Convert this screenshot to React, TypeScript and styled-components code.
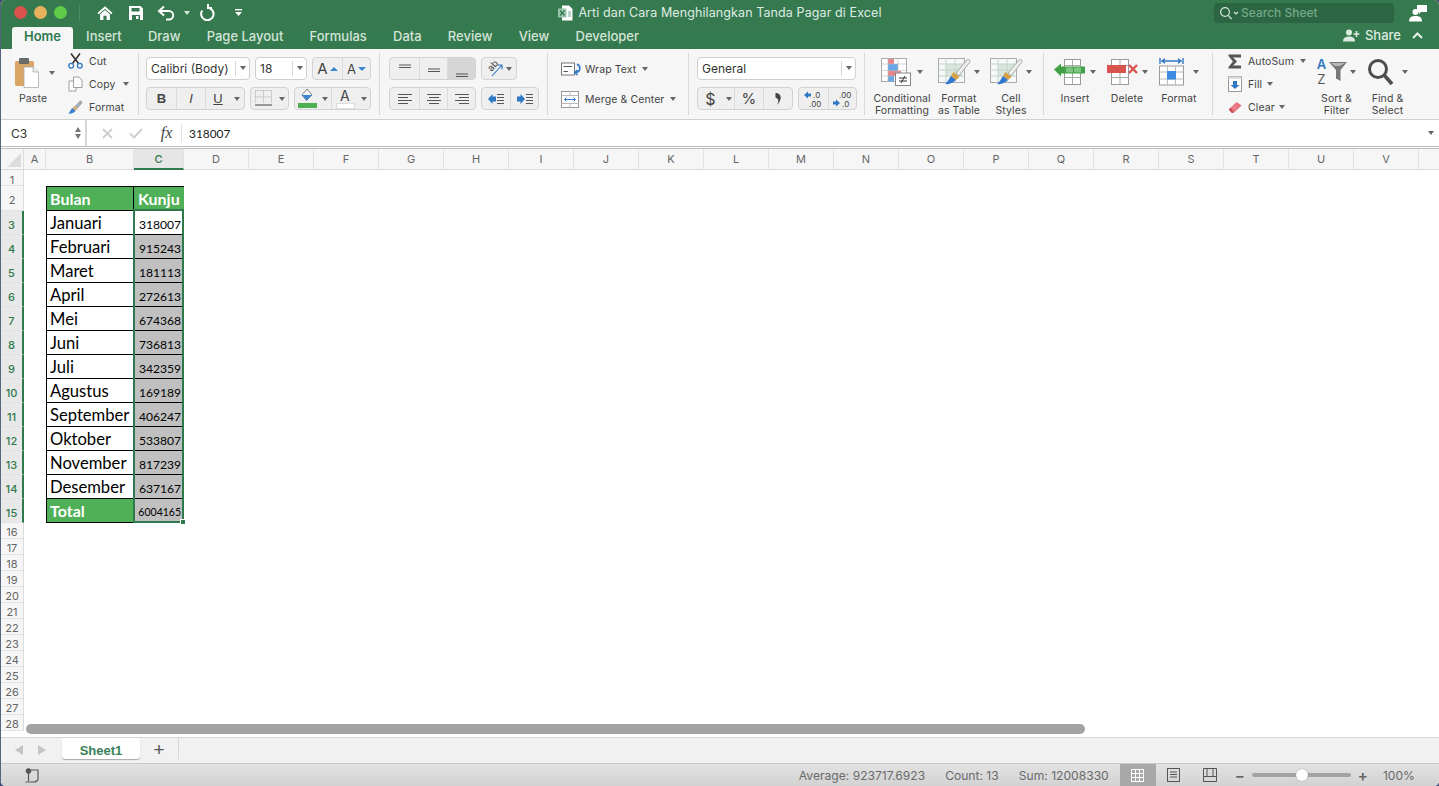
import React from "react";
import styled, { createGlobalStyle } from "styled-components";

const GlobalStyle = createGlobalStyle`
  html, body { margin: 0; padding: 0; height: 100%; background: #3d4c70; overflow: hidden; }
  #root { height: 100%; }
  * { box-sizing: border-box; }
`;

const ui = `Inter, "Liberation Sans", sans-serif`;
const calibri = `Lato, "Open Sans", sans-serif`;

const columns = ["D", "E", "F", "G", "H", "I", "J", "K", "L", "M", "N", "O", "P", "Q", "R", "S", "T", "U", "V", ""];
const months: [string, string][] = [
  ["Januari", "318007"],
  ["Februari", "915243"],
  ["Maret", "181113"],
  ["April", "272613"],
  ["Mei", "674368"],
  ["Juni", "736813"],
  ["Juli", "342359"],
  ["Agustus", "169189"],
  ["September", "406247"],
  ["Oktober", "533807"],
  ["November", "817239"],
  ["Desember", "637167"],
];

/* ---------- icons ---------- */

const HomeIcon = () => (
  <svg width="16" height="16" viewBox="0 0 18 17">
    <path d="M9 1 L17.5 8.6 L16 10 L9 3.8 L2 10 L.5 8.6 Z" fill="#fff" />
    <path d="M3.5 10 L9 5.2 L14.5 10 V16.5 H10.8 V11.5 H7.2 V16.5 H3.5 Z" fill="#fff" />
  </svg>
);
const SaveIcon = () => (
  <svg width="16" height="16" viewBox="0 0 16 16">
    <path d="M1 1 H12.5 L15 3.5 V15 H1 Z M3.5 3 V6.5 H11.5 V3 Z M4 10 V15 H12 V10 Z M8 11 H10.5 V14 H8 Z" fill="#fff" fillRule="evenodd" />
  </svg>
);
const UndoIcon = () => (
  <svg width="20" height="16" viewBox="0 0 20 16" fill="none" stroke="#fff" strokeWidth="2">
    <path d="M7 1.5 L2 6 L7 10.5 M2 6 H12 a4.2 4.2 0 0 1 0 8.5 H9" />
  </svg>
);
const RedoIcon = () => (
  <svg width="16" height="17" viewBox="0 0 16 17" fill="none" stroke="#fff" strokeWidth="2">
    <path d="M3.2 6.5 A6.2 6.2 0 1 0 10 4" />
    <path d="M13 4 H9 V0" />
  </svg>
);
const CustomizeIcon = () => (
  <svg width="9" height="9" viewBox="0 0 9 9">
    <rect x="1" y="1" width="7" height="1.4" fill="#fff" />
    <path d="M1 4 H8 L4.5 8 Z" fill="#fff" />
  </svg>
);
const ExcelFileIcon = () => (
  <svg width="15" height="16" viewBox="0 0 15 16">
    <path d="M4 .5 H11 L14.5 4 V15.5 H4 Z" fill="#fff" />
    <rect x="0" y="3.5" width="8.5" height="9" fill="#9cc4ac" />
    <path d="M2 5.5 L6.5 10.5 M6.5 5.5 L2 10.5" stroke="#2f7a4f" strokeWidth="1.2" />
    <path d="M10 7 H13 M10 9 H13 M10 11 H13" stroke="#7a9" strokeWidth="1" />
  </svg>
);
const SearchGlass = () => (
  <svg width="20" height="14" viewBox="0 0 20 14" fill="none" stroke="#d5e6da" strokeWidth="1.2">
    <circle cx="6" cy="6" r="4.4" />
    <path d="M9.2 9.4 L12.6 13" />
    <path d="M15 6 L17 8 L19 6" />
  </svg>
);
const ProfileIcon = () => (
  <svg width="18" height="18" viewBox="0 0 18 18">
    <path d="M8 1 H18 V8 H12 L10 10 V8 H8 Z" fill="#fff" />
    <circle cx="6.5" cy="8" r="3" fill="#fff" />
    <path d="M0 17.5 C0 13 3 12 6.5 12 C10 12 13 13 13 17.5 Z" fill="#fff" />
  </svg>
);
const ShareIcon = () => (
  <svg width="17" height="13" viewBox="0 0 17 13">
    <circle cx="6" cy="3.5" r="3" fill="#dcebe1" />
    <path d="M0 12.5 C0 8.5 3 7.5 6 7.5 C9 7.5 12 8.5 12 12.5 Z" fill="#dcebe1" />
    <path d="M13.5 2 V8 M10.5 5 H16.5" stroke="#dcebe1" strokeWidth="1.6" />
  </svg>
);
const ChevronUp = () => (
  <svg width="11" height="7" viewBox="0 0 11 7" fill="none" stroke="#e6f0e9" strokeWidth="2">
    <path d="M1 6 L5.5 1.5 L10 6" />
  </svg>
);
const PasteIcon = () => (
  <svg width="24" height="30" viewBox="0 0 24 30">
    <rect x="0" y="3" width="19" height="25" rx="1.5" fill="#d9a565" />
    <rect x="4" y="0" width="10" height="6" rx="1" fill="#6a6a6a" />
    <path d="M9 9 H18 L23.5 14 V29.5 H9 Z" fill="#fff" stroke="#aaa" strokeWidth=".8" />
    <path d="M18 9 V14 H23.5" fill="#eee" stroke="#aaa" strokeWidth=".8" />
  </svg>
);
const CutIcon = () => (
  <svg width="15" height="16" viewBox="0 0 15 16" fill="none">
    <path d="M3 .5 L10.5 10.5 M12 .5 L4.5 10.5" stroke="#333" strokeWidth="1.6" />
    <circle cx="3.2" cy="12.8" r="2.4" stroke="#2f78c4" strokeWidth="1.3" />
    <circle cx="11.8" cy="12.8" r="2.4" stroke="#2f78c4" strokeWidth="1.3" />
  </svg>
);
const CopyIcon = () => (
  <svg width="15" height="16" viewBox="0 0 15 16" fill="#fdfdfd" stroke="#8a8a8a" strokeWidth=".8">
    <path d="M1 5 H8 V15 H1 Z" />
    <path d="M5.5 1 H11 L14 4 V11.5 H5.5 Z" />
  </svg>
);
const BrushIcon = () => (
  <svg width="16" height="15" viewBox="0 0 16 15">
    <path d="M8 6 L12.5 1 C13.5 0 15.5 1.5 14.5 3 L10 8 Z" fill="#aab3bd" stroke="#6a7480" strokeWidth=".6" />
    <path d="M7 5.5 L10.5 8.8 L8 11 L4.5 8 Z" fill="#d6b07a" />
    <path d="M4.5 8 L8 11 C6 14 2.5 14.5 .5 14 C2 12.5 2.5 10 4.5 8 Z" fill="#3a7fd0" />
  </svg>
);
const OrientArrow = () => (
  <svg width="17" height="17" viewBox="0 0 17 17" fill="none">
    <path d="M5 16 L14.5 5.5 M10.5 5 H15 V9.5" stroke="#2f78c4" strokeWidth="1.1" />
  </svg>
);
const Lines = ({ items }: { items: [number, number][] }) => (
  <svg width="16" height="14" viewBox="0 0 16 14" stroke="#555" strokeWidth="1">
    {items.map(([x, w], i) => (
      <path key={i} d={`M${x} ${2.5 + i * 3} H${x + w}`} />
    ))}
  </svg>
);
const VLine = ({ y }: { y: number }) => (
  <svg width="14" height="18" viewBox="0 0 14 18" stroke="#555" strokeWidth="1">
    <path d={`M1 ${y} H13 M1 ${y + 2.5} H13`} />
  </svg>
);
const IndentIcon = ({ flip }: { flip?: boolean }) => (
  <svg width="18" height="12" viewBox="0 0 18 12">
    <path d={flip ? "M1 3.5 H4.5 V1 L9 6 L4.5 11 V8.5 H1 Z" : "M9 3.5 H5.5 V1 L1 6 L5.5 11 V8.5 H9 Z"} fill="#2f78c4" />
    <path d="M10 1.5 H17 M10 4.5 H17 M10 7.5 H17 M10 10.5 H17" stroke="#555" strokeWidth="1" />
  </svg>
);
const BorderIcon = () => (
  <svg width="17" height="17" viewBox="0 0 17 17" fill="none">
    <path d="M.5 .5 H16.5 M.5 .5 V13 M16.5 .5 V13 M8.5 .5 V13 M.5 7 H16.5" stroke="#aaa" strokeWidth="1" strokeDasharray="1 1" />
    <path d="M0 15 H17" stroke="#444" strokeWidth="1.2" />
  </svg>
);
const FillIcon = () => (
  <svg width="19" height="19" viewBox="0 0 19 19">
    <path d="M9 0 L14 6 L8.5 11.5 L4 6 Z" fill="#f5f5f5" stroke="#666" strokeWidth=".8" />
    <path d="M4 6 L14 6 L8.5 11.5 Z" fill="#3a86d0" />
    <rect x="0" y="14" width="19" height="5" fill="#4caf50" />
  </svg>
);
const CommaIcon = () => (
  <svg width="9" height="14" viewBox="0 0 9 14">
    <path d="M1.5 1 C6.5 1 9.5 6.5 3 13 C5 9 5 7 1.5 5.5 Z" fill="#444" />
  </svg>
);
const WrapIcon = () => (
  <svg width="21" height="14" viewBox="0 0 21 14" fill="none">
    <rect x=".5" y="1" width="13" height="12" fill="#fff" stroke="#777" />
    <path d="M2.5 4.5 H11 M2.5 9.5 H7" stroke="#555" />
    <path d="M16 2 C20 4 20 10 14.5 10.5 M16.5 8 L13.8 10.5 L16.5 13" stroke="#2f78c4" strokeWidth="1.6" />
  </svg>
);
const MergeIcon = () => (
  <svg width="18" height="17" viewBox="0 0 18 17" fill="none">
    <rect x=".5" y=".5" width="17" height="16" fill="#fff" stroke="#999" />
    <path d="M.5 4.5 H17.5 M.5 12.5 H17.5 M9 .5 V4.5 M9 12.5 V16.5" stroke="#bbb" />
    <path d="M3.5 8.5 H14.5 M5.5 6.5 L3.5 8.5 L5.5 10.5 M12.5 6.5 L14.5 8.5 L12.5 10.5" stroke="#2f78c4" />
  </svg>
);
const DecIncIcon = () => (
  <svg width="22" height="18" viewBox="0 0 22 18">
    <path d="M1 5 L5 1.5 V3.5 H8 V6.5 H5 V8.5 Z" fill="#2f78c4" />
    <text x="10" y="7.5" fontFamily={ui} fontSize="8" fill="#444">.0</text>
    <text x="6" y="16.5" fontFamily={ui} fontSize="8" fill="#444">.00</text>
  </svg>
);
const DecDecIcon = () => (
  <svg width="22" height="18" viewBox="0 0 22 18">
    <text x="7" y="7.5" fontFamily={ui} fontSize="8" fill="#444">.00</text>
    <path d="M8 13 L4 9.5 V11.5 H1 V14.5 H4 V16.5 Z" fill="#2f78c4" />
    <text x="10" y="16.5" fontFamily={ui} fontSize="8" fill="#444">.0</text>
  </svg>
);
const CondIcon = () => (
  <svg width="30" height="28" viewBox="0 0 30 28">
    <rect x=".5" y=".5" width="25" height="23" fill="#fff" stroke="#aaa" />
    <rect x="7" y="1" width="6" height="5" fill="#e8868a" />
    <rect x="7" y="6" width="10" height="7" fill="#6aa5e6" />
    <rect x="7" y="13" width="13" height="5" fill="#e8868a" />
    <rect x="7" y="18" width="6" height="5.5" fill="#6aa5e6" />
    <path d="M7 .5 V23.5 M17 .5 V23.5 M.5 6 H25 M.5 12.5 H25 M.5 18 H25" stroke="#bbb" strokeWidth=".6" />
    <rect x="14.5" y="15" width="15" height="12.5" fill="#fff" stroke="#888" />
    <path d="M18 20 H26 M18 23 H26 M24 18 L20 25" stroke="#333" strokeWidth="1" />
  </svg>
);
const TableBrushIcon = () => (
  <svg width="33" height="27" viewBox="0 0 33 27">
    <rect x=".5" y=".5" width="26" height="24" fill="#f6f9f7" stroke="#aaa" />
    <rect x="8" y="6" width="16" height="13" fill="#d9e6de" />
    <path d="M8 .5 V24.5 M17 .5 V24.5 M.5 6 H26.5 M.5 12 H26.5 M.5 18 H26.5" stroke="#c4d4ca" />
    <path d="M18 15 L29 2 C30.5 .5 33 2.5 31.5 4.5 L21 18 Z" fill="#eee" stroke="#888" strokeWidth=".7" />
    <path d="M15.5 14 L21.5 19 L18 22 L13 18 Z" fill="#d9a040" />
    <path d="M13 18 L18 22 C14 26 9 26.5 7 26 C10 24 10.5 21 13 18 Z" fill="#2f78d0" />
  </svg>
);
const InsertIcon = () => (
  <svg width="31" height="26" viewBox="0 0 31 26">
    <rect x="10.5" y=".5" width="16" height="25" fill="#fff" stroke="#999" />
    <path d="M18.5 .5 V25.5 M10.5 6.5 H26.5 M10.5 18.5 H26.5" stroke="#aaa" />
    <path d="M0 10.5 L7 4.5 V7.5 H31 V14.5 H7 V17.5 Z" fill="#43a047" />
    <rect x="12" y="8.5" width="7" height="5" fill="#7cc47f" />
    <rect x="20" y="8.5" width="7" height="5" fill="#7cc47f" />
  </svg>
);
const DeleteIcon = () => (
  <svg width="31" height="26" viewBox="0 0 31 26">
    <rect x="4.5" y=".5" width="17" height="25" fill="#fff" stroke="#999" />
    <path d="M13 .5 V25.5 M4.5 6.5 H21.5 M4.5 18.5 H21.5" stroke="#aaa" />
    <rect x="0" y="6" width="19" height="8" fill="#d9534f" />
    <path d="M22 6 L30 14 M30 6 L22 14" stroke="#d9534f" strokeWidth="2.4" />
  </svg>
);
const FormatIcon = () => (
  <svg width="25" height="28" viewBox="0 0 25 28">
    <path d="M1 0 V6 M24 0 V6 M3 3 H22 M6 .8 L3 3 L6 5.2 M19 .8 L22 3 L19 5.2" stroke="#2f78c4" strokeWidth="1.4" fill="none" />
    <rect x=".5" y="8" width="24" height="19" fill="#fff" stroke="#999" />
    <path d="M8.5 8 V27 M16.5 8 V27 M.5 14 H24.5 M.5 21 H24.5" stroke="#bbb" />
    <rect x="8" y="13" width="9" height="8.5" fill="#3f8be0" />
  </svg>
);
const SigmaIcon = () => (
  <svg width="14" height="15" viewBox="0 0 14 15">
    <path d="M.5 .5 H13 V3.5 H5 L9 7.5 L5 11.5 H13 V14.5 H.5 V13 L5 7.5 L.5 2 Z" fill="#555" />
  </svg>
);
const FillDownIcon = () => (
  <svg width="14" height="16" viewBox="0 0 14 16">
    <rect x=".5" y=".5" width="13" height="15" fill="#fff" stroke="#999" />
    <rect x=".5" y=".5" width="13" height="2.5" fill="#ddd" />
    <path d="M5 5 H9 V9 H11.5 L7 13 L2.5 9 H5 Z" fill="#2f78c4" />
  </svg>
);
const EraserIcon = () => (
  <svg width="17" height="15" viewBox="0 0 17 15">
    <path d="M1 9.5 L10.5 .8 L16.5 5 L7 14 H4 Z" fill="#e8757e" />
    <path d="M1 9.5 L4.5 14 H7 L3.5 8 Z" fill="#c24a55" />
    <path d="M6 7 H7 M9 6 H10 M8 9 H9" stroke="#fbd" strokeWidth="1" />
  </svg>
);
const FunnelIcon = () => (
  <svg width="18" height="20" viewBox="0 0 18 20">
    <path d="M0 0 H18 L11.5 8 V19 L7 16.5 V8 Z" fill="#777" />
    <path d="M2 1 H16 L11 4 H6 Z" fill="#b8b8b8" />
  </svg>
);
const FindIcon = () => (
  <svg width="27" height="28" viewBox="0 0 27 28" fill="none">
    <circle cx="11" cy="11" r="8.5" stroke="#4d4d4d" strokeWidth="3" />
    <path d="M17.5 17.5 L25 26" stroke="#4d4d4d" strokeWidth="3.6" />
  </svg>
);
const CrossIcon = () => (
  <svg width="11" height="11" viewBox="0 0 11 11" fill="none" stroke="#cfcfcf" strokeWidth="2">
    <path d="M1 1 L10 10 M10 1 L1 10" />
  </svg>
);
const CheckIcon = () => (
  <svg width="14" height="11" viewBox="0 0 14 11" fill="none" stroke="#cfcfcf" strokeWidth="2">
    <path d="M1 5.5 L5 9.5 L13 1" />
  </svg>
);
const NormalViewIcon = () => (
  <svg width="13" height="13" viewBox="0 0 13 13" fill="none" stroke="#fff" strokeWidth="1">
    <rect x=".5" y=".5" width="12" height="12" />
    <path d="M4.5 .5 V12.5 M8.5 .5 V12.5 M.5 4.5 H12.5 M.5 8.5 H12.5" />
  </svg>
);
const PageViewIcon = () => (
  <svg width="13" height="14" viewBox="0 0 13 14" fill="none" stroke="#555" strokeWidth="1">
    <rect x=".5" y=".5" width="12" height="13" />
    <path d="M3 4 H10 M3 6.5 H10 M3 9 H10" />
  </svg>
);
const BreakViewIcon = () => (
  <svg width="14" height="14" viewBox="0 0 14 14" fill="none" stroke="#555" strokeWidth="1">
    <path d="M.5 .5 H13.5 V13.5 H.5 Z M.5 8.5 H13.5 M4 .5 V8.5 M10 .5 V8.5" />
  </svg>
);
const MacroIcon = () => (
  <svg width="16" height="15" viewBox="0 0 16 15" fill="none" stroke="#555" strokeWidth="1.2">
    <circle cx="3.5" cy="3" r="2.2" fill="#555" />
    <path d="M3.5 5 V13 M.5 14 H11 M6 2 H13 V11 C13 13 11.5 13.5 10 13" />
  </svg>
);

/* ---------- title bar ---------- */

const Window = styled.div`
  height: 786px;
  display: flex;
  flex-direction: column;
  background: #fff;
  border-left: 1px solid #56657f;
  border-radius: 5px;
  overflow: hidden;
  font-family: ${ui};
`;

const Header = styled.header`
  height: 49px;
  background: linear-gradient(#37794f, #357a4f);
  color: #fff;
`;

const TitleRow = styled.div`
  height: 25px;
  display: grid;
  grid-template-columns: 1fr auto 1fr;
  align-items: center;
`;

const QuickAccess = styled.div`
  display: flex;
  align-items: center;
  padding-left: 13px;
`;

const Light = styled.span<{ $c: string }>`
  width: 13px;
  height: 13px;
  border-radius: 50%;
  margin-right: 7px;
  background: ${(p) => p.$c};
`;

const QuickDivider = styled.span`
  width: 1px;
  height: 16px;
  background: #4a8a62;
  margin: 0 17px 0 5px;
`;

const QuickSlot = styled.span<{ $gap: number }>`
  display: flex;
  align-items: center;
  margin-right: ${(p) => p.$gap}px;
`;

const SmallCaret = styled.span<{ $c?: string; $m?: number }>`
  display: inline-block;
  width: 0;
  height: 0;
  flex: none;
  border-left: 3px solid transparent;
  border-right: 3px solid transparent;
  border-top: 4px solid ${(p) => p.$c || "#666"};
  margin-left: ${(p) => p.$m ?? 0}px;
`;

const Title = styled.div`
  display: flex;
  align-items: center;
  gap: 5px;
  font-size: 12.5px;
  letter-spacing: 0.1px;
  color: #dfece4;
`;

const TitleRight = styled.div`
  display: flex;
  justify-content: flex-end;
  align-items: center;
  padding-right: 12px;
`;

const SearchBox = styled.div`
  width: 180px;
  height: 20px;
  border-radius: 4px;
  background: #2c6542;
  display: flex;
  align-items: center;
  gap: 2px;
  padding-left: 5px;
  margin-right: 15px;
  font-size: 12px;
  font-weight: 500;
  color: #72a988;
`;

const TabRow = styled.div`
  height: 24px;
  display: flex;
  align-items: flex-end;
  justify-content: space-between;
  padding-left: 11px;
`;

const Tabs = styled.nav`
  display: flex;
  align-items: flex-end;
`;

const Tab = styled.div<{ $active?: boolean }>`
  height: 22px;
  display: flex;
  align-items: center;
  padding: 0 ${(p) => (p.$active ? 12 : 13.1)}px 4px;
  font-size: 13px;
  border-radius: 3px 3px 0 0;
  color: ${(p) => (p.$active ? "#2f7a4d" : "#d3e4d9")};
  background: ${(p) => (p.$active ? "#f6f6f6" : "transparent")};
  font-weight: ${(p) => (p.$active ? 600 : 500)};
`;

const ShareArea = styled.div`
  display: flex;
  align-items: center;
  gap: 5px;
  height: 26px;
  padding-right: 16px;
  margin-bottom: 1px;
  font-size: 13px;
  font-weight: 500;
  color: #dcebe1;
`;

const ShareLabel = styled.span`
  margin-right: 6px;
`;

/* ---------- ribbon ---------- */

const Ribbon = styled.section`
  height: 71px;
  display: flex;
  padding: 4px 0 4px;
  background: #f6f6f6;
  border-bottom: 1px solid #cfcfcf;
  color: #444;
  font-size: 10.5px;
  letter-spacing: 0.1px;
`;

const Group = styled.div<{ $w?: number; $pl?: number }>`
  width: ${(p) => (p.$w ? `${p.$w}px` : "auto")};
  flex: ${(p) => (p.$w ? "none" : 1)};
  height: 62px;
  padding-left: ${(p) => p.$pl ?? 9}px;
  display: flex;
  border-right: ${(p) => (p.$w ? "1px solid #d9d9d9" : "none")};
`;

const Stack = styled.div<{ $gap: number; $pt: number; $w?: number }>`
  display: flex;
  flex-direction: column;
  gap: ${(p) => p.$gap}px;
  padding-top: ${(p) => p.$pt}px;
  ${(p) => p.$w && `width: ${p.$w}px;`}
`;

const ControlRow = styled.div`
  display: flex;
  gap: 5px;
  height: 23px;
`;

const Field = styled.div<{ $w: number }>`
  width: ${(p) => p.$w}px;
  height: 23px;
  display: flex;
  align-items: center;
  background: #fff;
  border: 1px solid #d0d0d0;
  border-radius: 4px;
  padding: 0 0 1px 4px;
  font-size: 12px;
  letter-spacing: 0;
  color: #333;
`;

const FieldArrow = styled.span`
  margin-left: auto;
  width: 14px;
  height: 15px;
  border-left: 1px solid #d8d8d8;
  display: flex;
  align-items: center;
  justify-content: center;
`;

const Segments = styled.div`
  display: flex;
  height: 23px;
  border: 1px solid #d2d2d2;
  border-radius: 4px;
  background: #efefef;
  overflow: hidden;
`;

const Segment = styled.div<{ $w: number; $on?: boolean; $plain?: boolean }>`
  width: ${(p) => p.$w}px;
  display: flex;
  align-items: center;
  justify-content: center;
  gap: 2px;
  color: #444;
  border-left: ${(p) => (p.$plain ? "none" : "1px solid #dadada")};
  background: ${(p) => (p.$on ? "#d6d6d6" : "transparent")};
  &:first-child {
    border-left: none;
  }
`;

const StyledLetter = styled.span<{ $b?: boolean; $i?: boolean; $u?: boolean }>`
  font-weight: ${(p) => (p.$b ? 700 : 400)};
  font-style: ${(p) => (p.$i ? "italic" : "normal")};
  text-decoration: ${(p) => (p.$u ? "underline" : "none")};
  font-family: "Liberation Sans", sans-serif;
  font-size: 13px;
`;

const Glyph = styled.span<{ $size: number }>`
  font-size: ${(p) => p.$size}px;
  line-height: 16px;
  color: #444;
`;

const TinyUp = styled.span<{ $down?: boolean }>`
  width: 0;
  height: 0;
  border-left: 4px solid transparent;
  border-right: 4px solid transparent;
  ${(p) => (p.$down ? "border-top: 4px solid #3a86d0;" : "border-bottom: 4px solid #3a86d0;")}
`;

const ColorLetter = styled.span`
  width: 17px;
  display: flex;
  flex-direction: column;
  align-items: center;
  font-size: 14px;
  line-height: 15px;
  color: #444;
  &::after {
    content: "";
    width: 17px;
    height: 4px;
    background: #fff;
    border: 1px solid #dcdcdc;
  }
`;

const OrientBox = styled.span`
  position: relative;
  width: 17px;
  height: 17px;
`;

const OrientText = styled.span`
  position: absolute;
  left: 0;
  top: 0;
  font-size: 9.5px;
  line-height: 11px;
  color: #444;
  transform: rotate(-48deg);
`;

const SortLetters = styled.span`
  display: flex;
  flex-direction: column;
  font-size: 13px;
  line-height: 15px;
`;

const SortA = styled.span`
  font-weight: 600;
  color: #2f78c4;
`;

const SortZ = styled.span`
  color: #555;
`;

const PasteBlock = styled.div`
  width: 67px;
  flex: none;
  display: flex;
  flex-direction: column;
`;

const PasteIconRow = styled.div`
  height: 39px;
  flex: none;
  display: flex;
  align-items: center;
  gap: 10px;
  padding-left: 14px;
`;

const PasteLabel = styled.span`
  margin: 1px 0 0 18px;
  line-height: 12px;
`;

const SmallRow = styled.div<{ $iconW: number; $iconGap?: number }>`
  height: 16px;
  display: flex;
  align-items: center;
  white-space: nowrap;
  & > svg {
    width: ${(p) => p.$iconW}px;
    flex: none;
    margin-right: ${(p) => p.$iconGap ?? 6}px;
  }
`;

const LargeButton = styled.div<{ $w: number }>`
  width: ${(p) => p.$w}px;
  flex: none;
  display: flex;
  flex-direction: column;
  align-items: center;
  text-align: center;
  line-height: 12px;
  white-space: nowrap;
`;

const LargeIcon = styled.div<{ $gap?: number }>`
  height: 40px;
  flex: none;
  padding-bottom: 3px;
  display: flex;
  align-items: center;
  gap: ${(p) => p.$gap ?? 3}px;
`;

/* ---------- formula bar ---------- */

const FormulaBar = styled.div`
  height: 26px;
  display: flex;
  align-items: center;
  background: #fff;
  font-size: 12px;
  color: #333;
`;

const NameBox = styled.div`
  width: 86px;
  height: 100%;
  display: flex;
  align-items: center;
  justify-content: space-between;
  padding: 0 4px 0 10px;
  border-right: 2px solid #d5d5d5;
`;

const Spinner = styled.div`
  display: flex;
  flex-direction: column;
  gap: 2px;
`;

const SpinArrow = styled.span<{ $up?: boolean }>`
  width: 0;
  height: 0;
  border-left: 3.5px solid transparent;
  border-right: 3.5px solid transparent;
  ${(p) => (p.$up ? "border-bottom: 5px solid #777;" : "border-top: 5px solid #777;")}
`;

const FormulaIcon = styled.span<{ $w: number }>`
  width: ${(p) => p.$w}px;
  display: flex;
  justify-content: center;
`;

const FxLabel = styled.span`
  width: 37px;
  padding-left: 7px;
  text-align: center;
  font-family: "Liberation Serif", serif;
  font-style: italic;
  font-size: 16px;
  color: #444;
  border-right: 1px solid #e0e0e0;
  margin-right: 7px;
  line-height: 18px;
`;

const FormulaText = styled.span`
  flex: 1;
  font-family: ${calibri};
  font-size: 11.9px;
  color: #222;
`;

const FormulaDrop = styled.span`
  display: flex;
  padding-right: 5px;
`;

const DoubleRule = styled.div`
  height: 3px;
  border-top: 1px solid #bdbdbd;
  border-bottom: 1px solid #bdbdbd;
  background: #fff;
`;

/* ---------- sheet ---------- */

const Sheet = styled.main`
  position: relative;
  flex: 1;
  min-height: 0;
  overflow: hidden;
  background: #fff;
  font-family: ${calibri};
`;

const ColumnRow = styled.div`
  height: 21px;
  display: flex;
  background: #f6f6f6;
  border-bottom: 1px solid #dcdcdc;
`;

const Corner = styled.div`
  position: relative;
  width: 23px;
  flex: none;
  border-right: 1px solid #dcdcdc;
  &::after {
    content: "";
    position: absolute;
    right: 2px;
    bottom: 2px;
    border-left: 14px solid transparent;
    border-bottom: 14px solid #dcdcdc;
  }
`;

const ColHead = styled.div<{ $w: number; $on?: boolean }>`
  width: ${(p) => p.$w}px;
  flex: none;
  display: flex;
  align-items: center;
  justify-content: center;
  font-family: ${ui};
  font-size: 11px;
  color: ${(p) => (p.$on ? "#2f7a4d" : "#666")};
  border-right: 1px solid #e2e2e2;
  ${(p) => p.$on && "background: #e6e6e6; border-bottom: 2px solid #2f7a4d; height: 21px; font-weight: 500;"}
`;

const Row = styled.div<{ $h: number }>`
  height: ${(p) => p.$h}px;
  display: flex;
`;

const RowHead = styled.div<{ $on?: boolean; $low?: boolean }>`
  width: 23px;
  flex: none;
  display: flex;
  align-items: center;
  justify-content: center;
  font-family: ${ui};
  font-size: 11px;
  padding-top: ${(p) => (p.$low ? 2 : 4)}px;
  color: ${(p) => (p.$on ? "#2f7a4d" : "#666")};
  font-weight: ${(p) => (p.$on ? 500 : 400)};
  background: ${(p) => (p.$on ? "#e8e8e8" : "#f6f6f6")};
  border-bottom: 1px solid #e2e2e2;
  border-right: ${(p) => (p.$on ? "2px solid #2f7a4d" : "1px solid #dcdcdc")};
`;

const ColumnA = styled.div`
  width: 22px;
  flex: none;
`;

const NameCell = styled.div<{ $head?: boolean; $top?: boolean }>`
  width: 88px;
  flex: none;
  display: flex;
  align-items: center;
  padding: ${(p) => (p.$head ? "0 0 1px 3px" : "1px 0 0 3px")};
  font-size: ${(p) => (p.$head ? 16 : 16.6)}px;
  color: ${(p) => (p.$head ? "#fff" : "#000")};
  font-weight: ${(p) => (p.$head ? 700 : 400)};
  background: ${(p) => (p.$head ? "#50b058" : "#fff")};
  border-left: 1px solid #000;
  border-right: 1px solid #000;
  border-bottom: 1px solid #000;
  ${(p) => p.$top && "border-top: 1px solid #000;"}
`;

const ValueCell = styled.div<{ $head?: boolean; $fill?: boolean; $small?: boolean; $top?: boolean }>`
  width: 50px;
  flex: none;
  display: flex;
  align-items: center;
  justify-content: ${(p) => (p.$head ? "flex-start" : "flex-end")};
  white-space: nowrap;
  padding: ${(p) => (p.$head ? "0 0 1px 4px" : "3px 3px 0 0")};
  font-size: ${(p) => (p.$head ? 16 : p.$small ? 10.5 : 12.1)}px;
  font-weight: ${(p) => (p.$head ? 700 : 400)};
  color: ${(p) => (p.$head ? "#fff" : "#000")};
  background: ${(p) => (p.$head ? "#50b058" : p.$fill ? "#c0c0c0" : "#fff")};
  border-bottom: 1px solid #000;
  ${(p) => p.$top && "border-top: 1px solid #000;"}
`;

const Selection = styled.div`
  position: absolute;
  left: 132px;
  top: 60px;
  width: 51px;
  height: 314px;
  border: 2px solid #2f7a4d;
  pointer-events: none;
`;

const FillHandle = styled.span`
  position: absolute;
  right: -4px;
  bottom: -4px;
  width: 6px;
  height: 6px;
  background: #2f7a4d;
  border: 1px solid #fff;
`;

const ScrollThumb = styled.div`
  position: absolute;
  left: 25px;
  bottom: 3px;
  width: 1059px;
  height: 10px;
  border-radius: 5px;
  background: #a3a3a3;
`;

/* ---------- bottom bars ---------- */

const SheetTabs = styled.div`
  height: 26px;
  display: flex;
  align-items: flex-start;
  background: #f1f1f1;
  border-top: 1px solid #d4d4d4;
  padding-left: 14px;
`;

const NavArrow = styled.span<{ $right?: boolean }>`
  width: 0;
  height: 0;
  margin: 7px 15px 0 0;
  border-top: 5.5px solid transparent;
  border-bottom: 5.5px solid transparent;
  ${(p) => (p.$right ? "border-left: 8px solid #c4c4c4;" : "border-right: 8px solid #c4c4c4;")}
`;

const SheetTab = styled.div`
  width: 78px;
  height: 21px;
  margin-left: 1px;
  padding-top: 3px;
  display: flex;
  align-items: center;
  justify-content: center;
  background: #fff;
  border-radius: 0 0 3px 3px;
  box-shadow: 0 1px 1px #a8a8a8;
  font-family: "Liberation Sans", sans-serif;
  font-size: 13px;
  font-weight: 700;
  color: #3a8058;
`;

const AddSheet = styled.div`
  width: 39px;
  height: 21px;
  padding-top: 2px;
  display: flex;
  align-items: center;
  justify-content: center;
  font-family: "Liberation Sans", sans-serif;
  font-size: 19px;
  color: #555;
  border-right: 1px solid #d6d6d6;
`;

const StatusBar = styled.footer`
  height: 23px;
  display: flex;
  align-items: center;
  background: linear-gradient(#e2e2e2, #d2d2d2);
  border-top: 1px solid #c8c8c8;
  padding-left: 24px;
  font-size: 12.1px;
  color: #6a6a6a;
`;

const StatusItem = styled.span<{ $mr: number }>`
  margin-right: ${(p) => p.$mr}px;
  white-space: nowrap;
`;

const Spacer = styled.div`
  flex: 1;
`;

const ViewButton = styled.div<{ $on?: boolean }>`
  width: 36px;
  height: 23px;
  display: flex;
  align-items: center;
  justify-content: center;
  background: ${(p) => (p.$on ? "#a8a8a8" : "transparent")};
`;

const ZoomSign = styled.span<{ $ml?: number }>`
  margin-left: ${(p) => p.$ml ?? 0}px;
  font-size: 15px;
  font-weight: 600;
  color: #666;
`;

const ZoomTrack = styled.div`
  position: relative;
  width: 99px;
  height: 4px;
  margin: 0 7px;
  border-radius: 2px;
  background: #a3a3a3;
`;

const ZoomKnob = styled.span`
  position: absolute;
  left: 44px;
  top: -4px;
  width: 12px;
  height: 12px;
  border-radius: 50%;
  background: #fff;
  box-shadow: 0 0 1px #777;
`;

const ZoomValue = styled.span`
  margin: 0 24px 0 15px;
`;

/* ---------- page ---------- */

const App = () => {
  return (
    <>
      <GlobalStyle />
      <Window>
        <Header>
          <TitleRow>
            <QuickAccess>
              <Light $c="#d9534a" />
              <Light $c="#e8b15e" />
              <Light $c="#5ecb4b" />
              <QuickDivider />
              <QuickSlot $gap={15}><HomeIcon /></QuickSlot>
              <QuickSlot $gap={13}><SaveIcon /></QuickSlot>
              <QuickSlot $gap={9}>
                <UndoIcon />
                <SmallCaret $c="#d7e6dc" $m={7} />
              </QuickSlot>
              <QuickSlot $gap={19}><RedoIcon /></QuickSlot>
              <QuickSlot $gap={0}><CustomizeIcon /></QuickSlot>
            </QuickAccess>
            <Title>
              <ExcelFileIcon />
              Arti dan Cara Menghilangkan Tanda Pagar di Excel
            </Title>
            <TitleRight>
              <SearchBox>
                <SearchGlass />
                Search Sheet
              </SearchBox>
              <ProfileIcon />
            </TitleRight>
          </TitleRow>
          <TabRow>
            <Tabs>
              <Tab $active>Home</Tab>
              <Tab>Insert</Tab>
              <Tab>Draw</Tab>
              <Tab>Page Layout</Tab>
              <Tab>Formulas</Tab>
              <Tab>Data</Tab>
              <Tab>Review</Tab>
              <Tab>View</Tab>
              <Tab>Developer</Tab>
            </Tabs>
            <ShareArea>
              <ShareIcon />
              <ShareLabel>Share</ShareLabel>
              <ChevronUp />
            </ShareArea>
          </TabRow>
        </Header>

        <Ribbon>
          <Group $w={138} $pl={0}>
            <PasteBlock>
              <PasteIconRow>
                <PasteIcon />
                <SmallCaret />
              </PasteIconRow>
              <PasteLabel>Paste</PasteLabel>
            </PasteBlock>
            <Stack $gap={7} $pt={0}>
              <SmallRow $iconW={15}><CutIcon />Cut</SmallRow>
              <SmallRow $iconW={15}><CopyIcon />Copy <SmallCaret $m={7} /></SmallRow>
              <SmallRow $iconW={15}><BrushIcon />Format</SmallRow>
            </Stack>
          </Group>

          <Group $w={241} $pl={7}>
            <Stack $gap={7} $pt={4}>
              <ControlRow>
                <Field $w={104}>Calibri (Body)<FieldArrow><SmallCaret /></FieldArrow></Field>
                <Field $w={52}>18<FieldArrow><SmallCaret /></FieldArrow></Field>
                <Segments>
                  <Segment $w={29}><Glyph $size={15}>A</Glyph><TinyUp /></Segment>
                  <Segment $w={28}><Glyph $size={13}>A</Glyph><TinyUp $down /></Segment>
                </Segments>
              </ControlRow>
              <ControlRow>
                <Segments>
                  <Segment $w={29}><StyledLetter $b>B</StyledLetter></Segment>
                  <Segment $w={29}><StyledLetter $i>I</StyledLetter></Segment>
                  <Segment $w={25}><StyledLetter $u>U</StyledLetter></Segment>
                  <Segment $w={14} $plain><SmallCaret /></Segment>
                </Segments>
                <Segments>
                  <Segment $w={24}><BorderIcon /></Segment>
                  <Segment $w={13} $plain><SmallCaret /></Segment>
                </Segments>
                <Segments>
                  <Segment $w={24}><FillIcon /></Segment>
                  <Segment $w={12} $plain><SmallCaret /></Segment>
                  <Segment $w={27}><ColorLetter>A</ColorLetter></Segment>
                  <Segment $w={12} $plain><SmallCaret /></Segment>
                </Segments>
              </ControlRow>
            </Stack>
          </Group>

          <Group $w={168} $pl={9}>
            <Stack $gap={7} $pt={4}>
              <ControlRow>
                <Segments>
                  <Segment $w={29}><VLine y={5} /></Segment>
                  <Segment $w={28}><VLine y={9} /></Segment>
                  <Segment $w={28} $on><VLine y={14} /></Segment>
                </Segments>
                <Segments>
                  <Segment $w={34}>
                    <OrientBox>
                      <OrientArrow />
                      <OrientText>ab</OrientText>
                    </OrientBox>
                    <SmallCaret />
                  </Segment>
                </Segments>
              </ControlRow>
              <ControlRow>
                <Segments>
                  <Segment $w={29}><Lines items={[[1, 14], [1, 10], [1, 14], [1, 10]]} /></Segment>
                  <Segment $w={28}><Lines items={[[1, 14], [3, 10], [1, 14], [3, 10]]} /></Segment>
                  <Segment $w={28}><Lines items={[[1, 14], [5, 10], [1, 14], [5, 10]]} /></Segment>
                </Segments>
                <Segments>
                  <Segment $w={28}><IndentIcon /></Segment>
                  <Segment $w={28}><IndentIcon flip /></Segment>
                </Segments>
              </ControlRow>
            </Stack>
          </Group>

          <Group $w={141} $pl={13}>
            <Stack $gap={14} $pt={8}>
              <SmallRow $iconW={21} $iconGap={3}><WrapIcon />Wrap Text <SmallCaret $m={6} /></SmallRow>
              <SmallRow $iconW={18}><MergeIcon />Merge &amp; Center <SmallCaret $m={6} /></SmallRow>
            </Stack>
          </Group>

          <Group $w={176} $pl={8}>
            <Stack $gap={7} $pt={4}>
              <Field $w={159}>General<FieldArrow><SmallCaret /></FieldArrow></Field>
              <ControlRow>
                <Segments>
                  <Segment $w={25}><Glyph $size={16}>$</Glyph></Segment>
                  <Segment $w={11} $plain><SmallCaret /></Segment>
                  <Segment $w={29}><Glyph $size={15}>%</Glyph></Segment>
                  <Segment $w={29}><CommaIcon /></Segment>
                </Segments>
                <Segments>
                  <Segment $w={29}><DecIncIcon /></Segment>
                  <Segment $w={28}><DecDecIcon /></Segment>
                </Segments>
              </ControlRow>
            </Stack>
          </Group>

          <Group $w={179} $pl={9}>
            <LargeButton $w={56}>
              <LargeIcon $gap={6}><CondIcon /><SmallCaret /></LargeIcon>
              Conditional<br />Formatting
            </LargeButton>
            <LargeButton $w={58}>
              <LargeIcon><TableBrushIcon /><SmallCaret /></LargeIcon>
              Format<br />as Table
            </LargeButton>
            <LargeButton $w={46}>
              <LargeIcon><TableBrushIcon /><SmallCaret /></LargeIcon>
              Cell<br />Styles
            </LargeButton>
          </Group>

          <Group $w={169} $pl={5}>
            <LargeButton $w={52}>
              <LargeIcon $gap={5}><InsertIcon /><SmallCaret /></LargeIcon>
              Insert
            </LargeButton>
            <LargeButton $w={52}>
              <LargeIcon $gap={4}><DeleteIcon /><SmallCaret /></LargeIcon>
              Delete
            </LargeButton>
            <LargeButton $w={52}>
              <LargeIcon $gap={9}><FormatIcon /><SmallCaret /></LargeIcon>
              Format
            </LargeButton>
          </Group>

          <Group $pl={15}>
            <Stack $gap={7} $pt={0} $w={83}>
              <SmallRow $iconW={14}><SigmaIcon />AutoSum <SmallCaret $m={6} /></SmallRow>
              <SmallRow $iconW={14}><FillDownIcon />Fill <SmallCaret $m={5} /></SmallRow>
              <SmallRow $iconW={14}><EraserIcon />Clear <SmallCaret $m={4} /></SmallRow>
            </Stack>
            <LargeButton $w={51}>
              <LargeIcon $gap={3}>
                <SortLetters>
                  <SortA>A</SortA>
                  <SortZ>Z</SortZ>
                </SortLetters>
                <FunnelIcon />
                <SmallCaret />
              </LargeIcon>
              Sort &amp;<br />Filter
            </LargeButton>
            <LargeButton $w={51}>
              <LargeIcon $gap={8}><FindIcon /><SmallCaret /></LargeIcon>
              Find &amp;<br />Select
            </LargeButton>
          </Group>
        </Ribbon>

        <FormulaBar>
          <NameBox>
            C3
            <Spinner>
              <SpinArrow $up />
              <SpinArrow />
            </Spinner>
          </NameBox>
          <FormulaIcon $w={40}><CrossIcon /></FormulaIcon>
          <FormulaIcon $w={18}><CheckIcon /></FormulaIcon>
          <FxLabel>fx</FxLabel>
          <FormulaText>318007</FormulaText>
          <FormulaDrop><SmallCaret $c="#666" /></FormulaDrop>
        </FormulaBar>
        <DoubleRule />

        <Sheet>
          <ColumnRow>
            <Corner />
            <ColHead $w={22}>A</ColHead>
            <ColHead $w={88}>B</ColHead>
            <ColHead $w={50} $on>C</ColHead>
            {columns.map((c) => (
              <ColHead key={c} $w={65}>{c}</ColHead>
            ))}
          </ColumnRow>

          <Row $h={16}><RowHead>1</RowHead></Row>
          <Row $h={25}>
            <RowHead>2</RowHead>
            <ColumnA />
            <NameCell $head $top>Bulan</NameCell>
            <ValueCell $head $top>Kunju</ValueCell>
          </Row>
          {months.map(([name, value], i) => (
            <Row key={name} $h={24}>
              <RowHead $on>{i + 3}</RowHead>
              <ColumnA />
              <NameCell>{name}</NameCell>
              <ValueCell $fill={i > 0}>{value}</ValueCell>
            </Row>
          ))}
          <Row $h={24}>
            <RowHead $on>15</RowHead>
            <ColumnA />
            <NameCell $head>Total</NameCell>
            <ValueCell $fill $small>6004165</ValueCell>
          </Row>
          {Array.from({ length: 13 }, (_, i) => (
            <Row key={i} $h={16}><RowHead $low>{i + 16}</RowHead></Row>
          ))}

          <Selection><FillHandle /></Selection>
          <ScrollThumb />
        </Sheet>

        <SheetTabs>
          <NavArrow />
          <NavArrow $right />
          <SheetTab>Sheet1</SheetTab>
          <AddSheet>+</AddSheet>
        </SheetTabs>

        <StatusBar>
          <MacroIcon />
          <Spacer />
          <StatusItem $mr={20}>Average: 923717.6923</StatusItem>
          <StatusItem $mr={20}>Count: 13</StatusItem>
          <StatusItem $mr={11}>Sum: 12008330</StatusItem>
          <ViewButton $on><NormalViewIcon /></ViewButton>
          <ViewButton><PageViewIcon /></ViewButton>
          <ViewButton><BreakViewIcon /></ViewButton>
          <ZoomSign $ml={7}>−</ZoomSign>
          <ZoomTrack><ZoomKnob /></ZoomTrack>
          <ZoomSign>+</ZoomSign>
          <ZoomValue>100%</ZoomValue>
        </StatusBar>
      </Window>
    </>
  );
};

export default App;
